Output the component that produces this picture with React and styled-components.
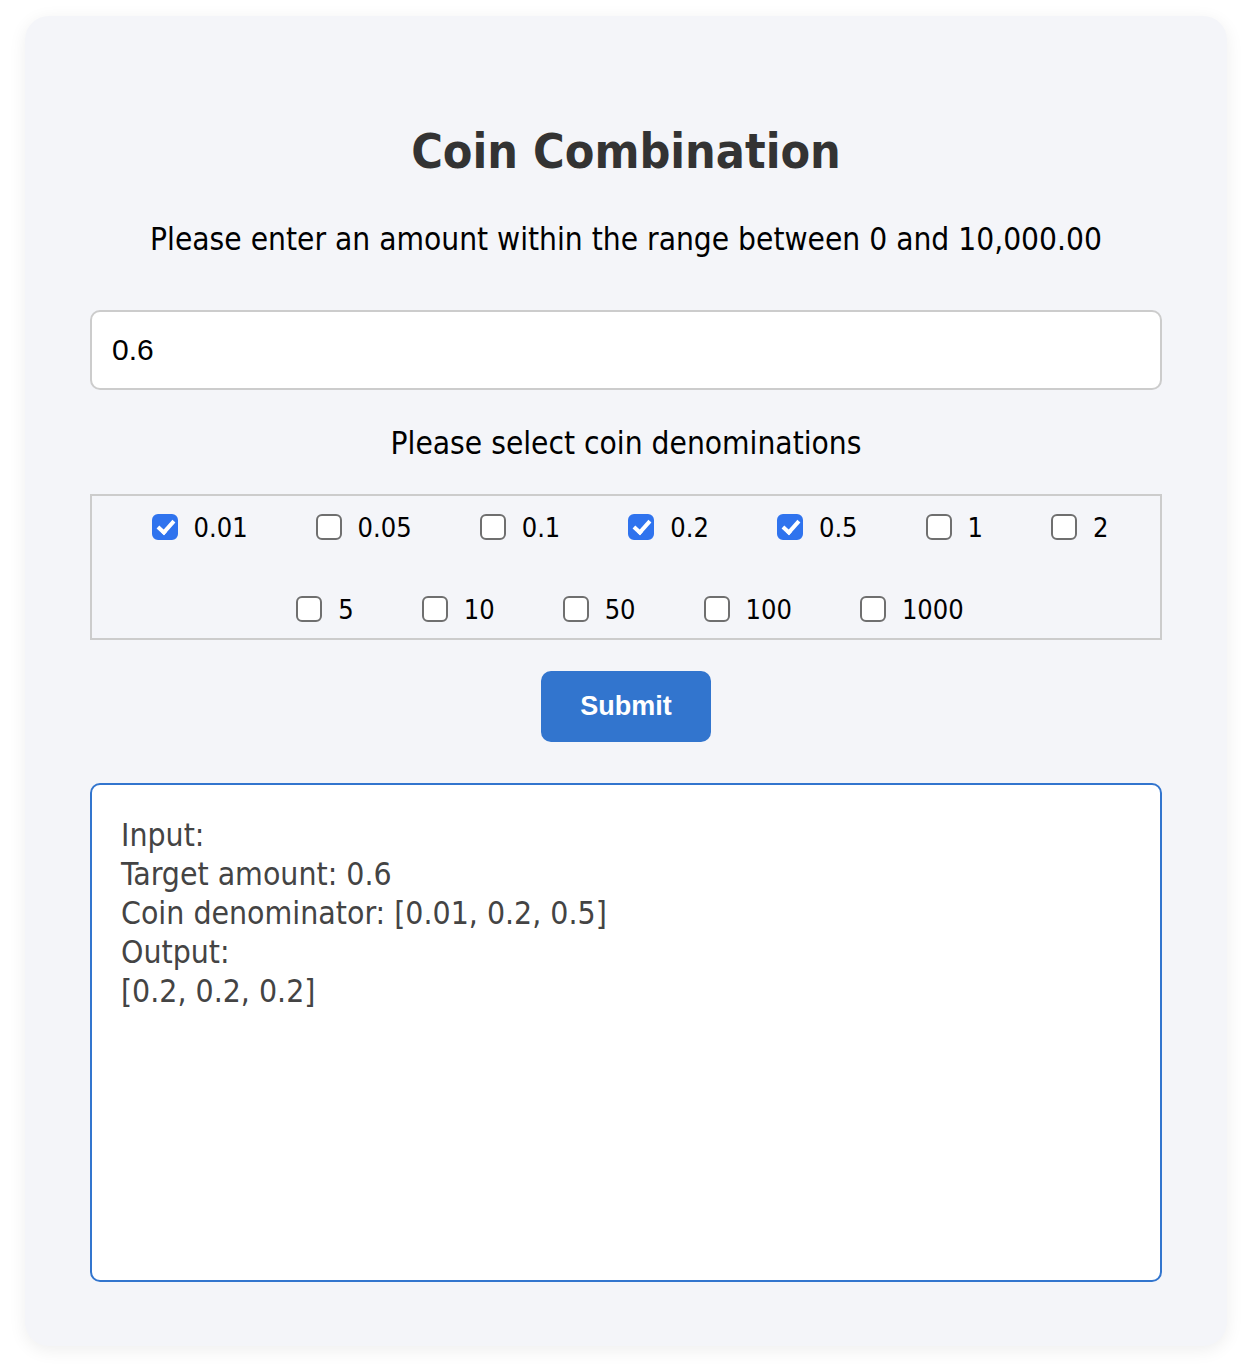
import React, { useState } from 'react';
import styled, { createGlobalStyle } from 'styled-components';

const GlobalStyle = createGlobalStyle`
  body {
    margin: 0;
    background: #ffffff;
    font-family: "DejaVu Sans Condensed", "DejaVu Sans", sans-serif;
  }
`;

const Page = styled.div`
  padding: 16px 15px 18px 25px;
`;

const Card = styled.main`
  background-color: #f4f5f9;
  border-radius: 24px;
  box-shadow: 0 4px 18px rgba(0, 0, 0, 0.07);
  padding: 65px;
  height: 1330px;
  box-sizing: border-box;
`;

const Title = styled.h1`
  margin: 40px 0 38px;
  font-size: 48px;
  line-height: 60px;
  font-weight: bold;
  color: #333;
  text-align: center;
`;

const Prompt = styled.p`
  margin: 0;
  font-size: 31.4px;
  line-height: 40px;
  color: #000;
  text-align: center;
`;

const AmountInput = styled.input`
  display: block;
  box-sizing: border-box;
  width: 100%;
  height: 80px;
  margin: 51px 0 33px;
  padding: 0 20px;
  border: 2px solid #cccccc;
  border-radius: 10px;
  background: #fff;
  font-family: "Liberation Sans", Arial, sans-serif;
  font-size: 30px;
  color: #000;
  outline: none;
`;

const CoinGroup = styled.div`
  margin: 31px 0;
  border: 2px solid #cccccc;
  padding: 10px 20px 8px;
  display: flex;
  flex-wrap: wrap;
  justify-content: center;
  column-gap: 60px;
  row-gap: 40px;
`;

const CoinOption = styled.label`
  display: flex;
  align-items: center;
  height: 42px;
  font-size: 27px;
  color: #000;
  cursor: pointer;
`;

const CoinBox = styled.input`
  appearance: none;
  box-sizing: border-box;
  width: 26px;
  height: 26px;
  margin: 0 16px 0 8px;
  border: 2px solid #6f6f6f;
  border-radius: 6px;
  background: #fff;
  position: relative;
  cursor: pointer;

  &:checked {
    border-color: #2f73ee;
    background: #2f73ee;
  }

  &:checked::after {
    content: '';
    position: absolute;
    left: 7px;
    top: 1px;
    width: 6px;
    height: 13px;
    border: solid #fff;
    border-width: 0 4px 4px 0;
    transform: rotate(42deg);
  }
`;

const SubmitButton = styled.button`
  display: block;
  margin: 0 auto 41px;
  width: 170px;
  height: 71px;
  border: none;
  border-radius: 10px;
  background-color: #3275ce;
  color: #fff;
  font-family: "Liberation Sans", Arial, sans-serif;
  font-weight: bold;
  font-size: 27px;
  cursor: pointer;
`;

const ResultBox = styled.div`
  box-sizing: border-box;
  height: 499px;
  border: 2px solid #3275ce;
  border-radius: 10px;
  background: #fff;
  padding: 31px 29px;
  font-size: 31.7px;
  line-height: 39px;
  color: #444;
  white-space: pre-line;
`;

const coins = ['0.01', '0.05', '0.1', '0.2', '0.5', '1', '2', '5', '10', '50', '100', '1000'];

export default function App() {
  const [amount, setAmount] = useState('0.6');
  const [picked, setPicked] = useState(['0.01', '0.2', '0.5']);

  const toggle = (c) =>
    setPicked((prev) => (prev.includes(c) ? prev.filter((x) => x !== c) : [...prev, c]));

  return (
    <Page>
      <GlobalStyle />
      <Card>
        <Title>Coin Combination</Title>
        <Prompt>Please enter an amount within the range between 0 and 10,000.00</Prompt>
        <AmountInput value={amount} onChange={(e) => setAmount(e.target.value)} />
        <Prompt>Please select coin denominations</Prompt>
        <CoinGroup>
          {coins.map((c) => (
            <CoinOption key={c}>
              <CoinBox type="checkbox" checked={picked.includes(c)} onChange={() => toggle(c)} />
              {c}
            </CoinOption>
          ))}
        </CoinGroup>
        <SubmitButton>Submit</SubmitButton>
        <ResultBox>
          {'Input:\nTarget amount: 0.6\nCoin denominator: [0.01, 0.2, 0.5]\nOutput:\n[0.2, 0.2, 0.2]'}
        </ResultBox>
      </Card>
    </Page>
  );
}
